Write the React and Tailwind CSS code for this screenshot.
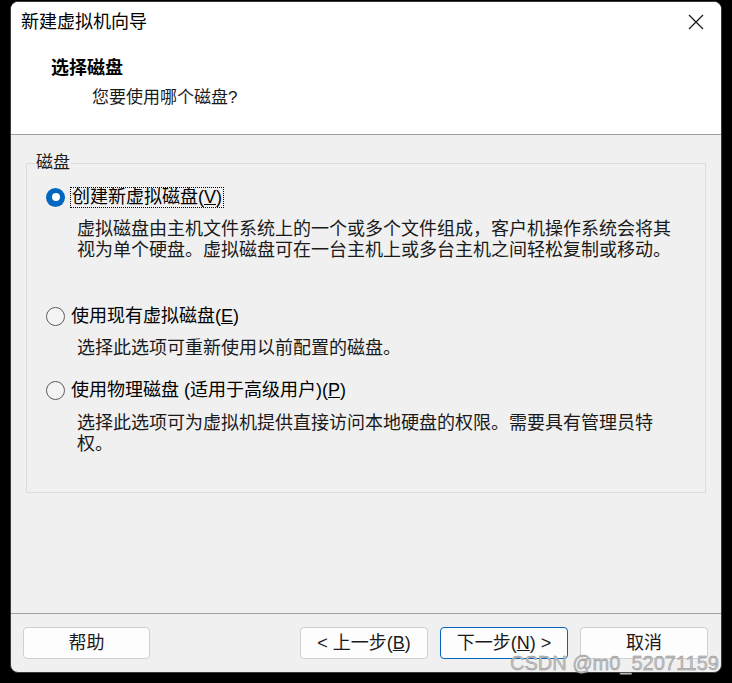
const FONT = "font-['Liberation_Sans','Noto_Sans_CJK_SC',sans-serif]";

function Radio({ checked }) {
  if (checked) {
    return (
      <span className="flex h-[19px] w-[19px] shrink-0 items-center justify-center rounded-full bg-[#0067c0]">
        <span className="h-[8px] w-[8px] rounded-full bg-white" />
      </span>
    );
  }
  return (
    <span className="h-[19px] w-[19px] shrink-0 rounded-full border border-[#5c5c5c] bg-[#f4f4f4]" />
  );
}

function Button({ children, primary }) {
  return (
    <button
      className={
        primary
          ? "h-[32px] w-[128px] rounded-[4px] border border-[#0067c0] bg-[#fdfdfd] text-[18px] leading-[20px] text-[#1a1a1a]"
          : "h-[32px] w-[128px] rounded-[4px] border border-[#d0d0d0] bg-[#fdfdfd] text-[18px] leading-[20px] text-[#1a1a1a]"
      }
    >
      {children}
    </button>
  );
}

export default function App() {
  return (
    <div className={`relative h-[683px] w-[732px] overflow-hidden bg-black pt-[1px] ${FONT}`}>
      {/* Window */}
      <div className="ml-[10px] flex h-[672px] w-[712px] flex-col overflow-hidden rounded-[8px] border border-[#3a3a3a] bg-[#f0f0f0]">
        {/* Header */}
        <div className="h-[133px] shrink-0 border-b border-[#a0a0a0] bg-white">
          <div className="flex h-[40px] items-center justify-between pl-[10px] pr-[17px]">
            <span className="text-[18px] leading-[24px] text-black">新建虚拟机向导</span>
            <svg width="16" height="16" viewBox="0 0 16 16">
              <path d="M1 1 L15 15 M15 1 L1 15" stroke="#1a1a1a" strokeWidth="1.3" fill="none" />
            </svg>
          </div>
          <div className="mt-[14px] pl-[40px] text-[18px] font-bold leading-[24px] text-black">
            选择磁盘
          </div>
          <div className="mt-[6px] pl-[81px] text-[17px] leading-[24px] text-[#1a1a1a]">
            您要使用哪个磁盘?
          </div>
        </div>

        {/* Body */}
        <div className="flex-1 px-[15px] pt-[28px]">
          <div className="relative h-[330px] border border-[#dcdcdc] pl-[19px] pt-[23px]">
            <span className="absolute left-[8px] top-[-11px] bg-[#f0f0f0] px-[1px] text-[17px] leading-[20px] text-[#1a1a1a]">
              磁盘
            </span>

            <div className="flex h-[20px] items-center">
              <Radio checked />
              <span className="ml-[5px] flex h-[21px] items-center border border-dotted border-black px-[1px] text-[18px] leading-[20px] text-black">
                创建新虚拟磁盘(<u>V</u>)
              </span>
            </div>
            <p className="mt-[12px] pl-[31px] text-[18px] leading-[21px] text-[#1a1a1a]">
              虚拟磁盘由主机文件系统上的一个或多个文件组成，客户机操作系统会将其
              <br />
              视为单个硬盘。虚拟磁盘可在一台主机上或多台主机之间轻松复制或移动。
            </p>

            <div className="mt-[45px] flex h-[20px] items-center">
              <Radio />
              <span className="ml-[6px] text-[18px] leading-[20px] text-black">
                使用现有虚拟磁盘(<u>E</u>)
              </span>
            </div>
            <p className="mt-[12px] pl-[31px] text-[18px] leading-[21px] text-[#1a1a1a]">
              选择此选项可重新使用以前配置的磁盘。
            </p>

            <div className="mt-[21px] flex h-[20px] items-center">
              <Radio />
              <span className="ml-[6px] text-[18px] leading-[20px] text-black">
                使用物理磁盘 (适用于高级用户)(<u>P</u>)
              </span>
            </div>
            <p className="mt-[13px] pl-[31px] text-[18px] leading-[21px] text-[#1a1a1a]">
              选择此选项可为虚拟机提供直接访问本地硬盘的权限。需要具有管理员特
              <br />
              权。
            </p>
          </div>
        </div>

        {/* Footer */}
        <div className="flex h-[59px] shrink-0 items-center border-t border-[#a0a0a0] pl-[12px] pr-[13px]">
          <button className="h-[32px] w-[127px] rounded-[4px] border border-[#d0d0d0] bg-[#fdfdfd] text-[18px] leading-[20px] text-[#1a1a1a]">
            帮助
          </button>
          <div className="flex-1" />
          <div className="flex gap-[12px]">
            <Button>
              &lt; 上一步(<u>B</u>)
            </Button>
            <Button primary>
              下一步(<u>N</u>) &gt;
            </Button>
            <Button>取消</Button>
          </div>
        </div>
      </div>

      {/* Watermark */}
      <span className="pointer-events-none absolute left-[510px] top-[653px] font-['Liberation_Sans',sans-serif] text-[20px] leading-[20px] text-[#c4c4c4] [-webkit-text-stroke:0.4px_#8a8a8a]">
        CSDN @m0_52071159
      </span>
    </div>
  );
}
